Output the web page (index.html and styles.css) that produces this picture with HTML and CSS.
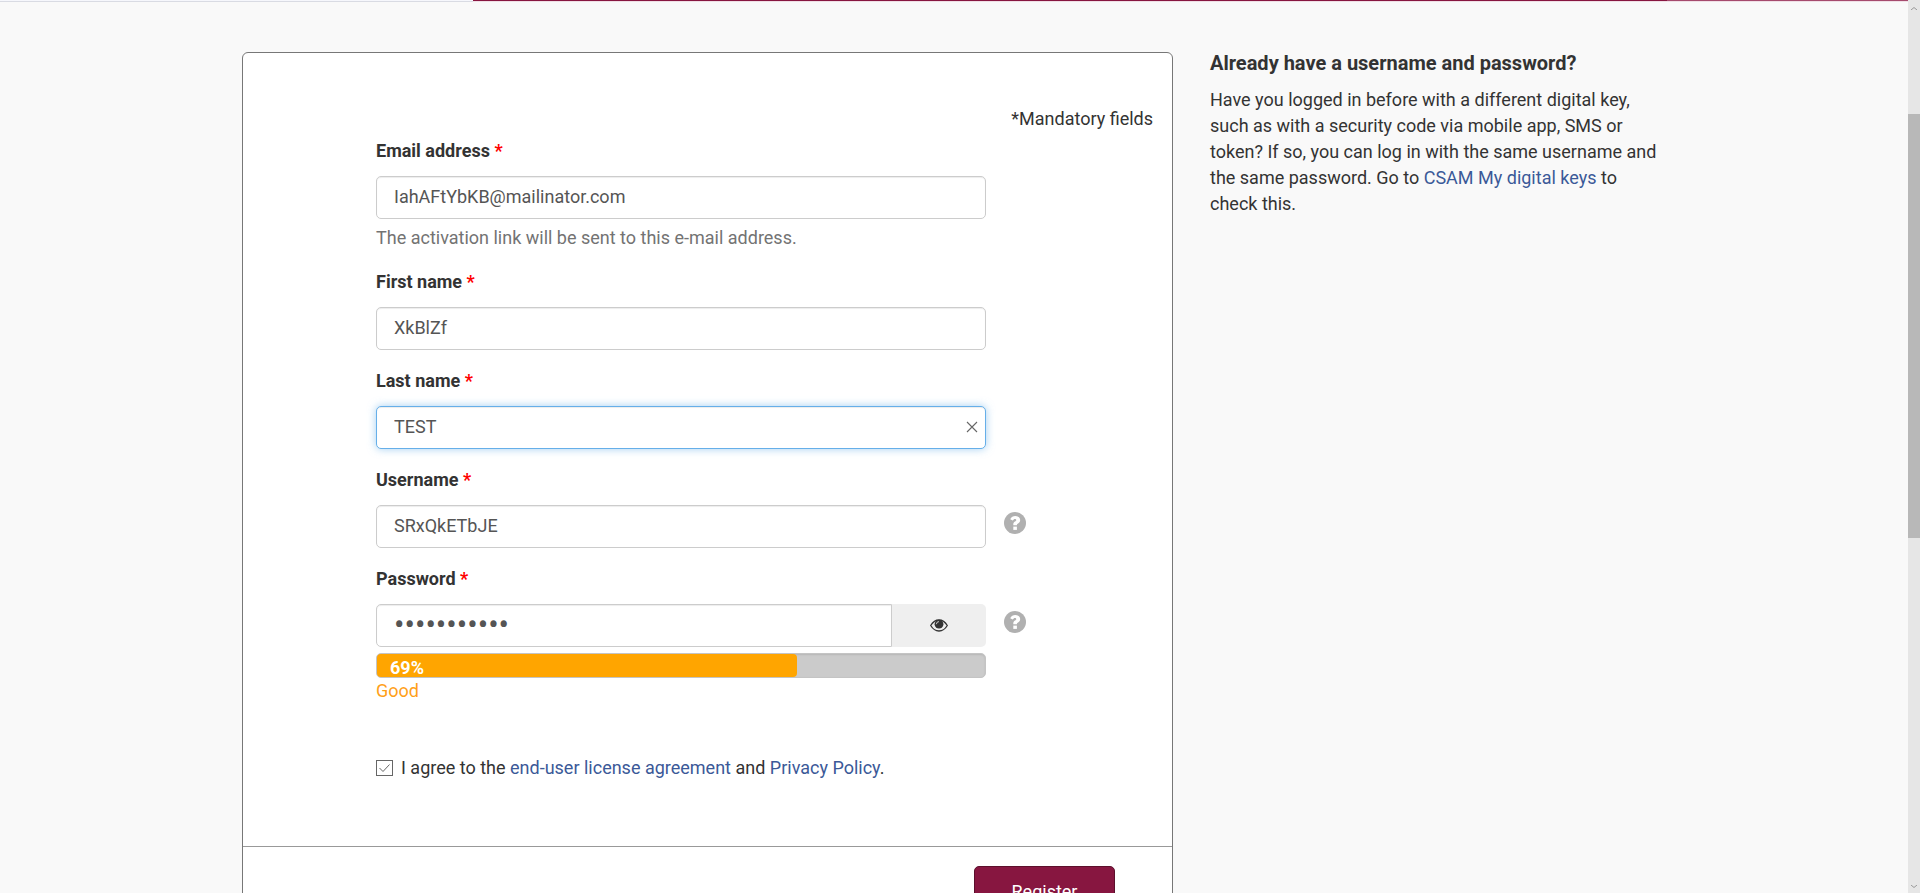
FILE: index.html
```html
<!DOCTYPE html>
<html lang="en">
<head>
<meta charset="utf-8">
<title>Register</title>
<link rel="stylesheet" href="styles.css">
</head>
<body>
<svg class="defs" aria-hidden="true">
  <symbol id="help" viewBox="0 0 22 22">
    <circle cx="11" cy="11" r="11" fill="#b0b0b0"/>
    <path d="M6.2 7.2C7.4 5 9 3.900 11.300 3.900c2.700 0 4.900 1.700 4.900 4.100 0 2.500-1.700 3.200-2.500 3.800-.6.400-.8.700-.8 1.400H9.300c-.1-2 .4-2.700 1.700-3.600.8-.5 1.300-.8 1.300-1.500 0-.7-.6-1.100-1.400-1.100-.9 0-1.400.5-2.200 1.600z" fill="#fff"/>
    <rect x="9.300" y="14.600" width="3.600" height="3.300" fill="#fff"/>
  </symbol>
</svg>
<div class="page">
  <div class="band"><span class="band-start"></span><span class="band-main"></span><span class="band-end"></span></div>
  <main class="layout">
    <form class="card">
      <div class="card-body">
        <p class="mandatory">*Mandatory fields</p>
        <div class="fields">
          <div class="field">
            <label class="label" for="email">Email address <span class="req">*</span></label>
            <input class="input" id="email" type="email" value="IahAFtYbKB@mailinator.com">
            <p class="hint">The activation link will be sent to this e-mail address.</p>
          </div>
          <div class="field">
            <label class="label" for="first">First name <span class="req">*</span></label>
            <input class="input" id="first" type="text" value="XkBlZf">
          </div>
          <div class="field">
            <label class="label" for="last">Last name <span class="req">*</span></label>
            <div class="clearable">
              <input class="input input-active" id="last" type="text" value="TEST">
              <button class="clear" type="button" aria-label="Clear"><svg width="12" height="12" viewBox="0 0 12 12"><path d="M1 1l10 10M11 1L1 11" stroke="#666" stroke-width="1.100"/></svg></button>
            </div>
          </div>
          <div class="field">
            <label class="label" for="user">Username <span class="req">*</span></label>
            <div class="with-help">
              <input class="input" id="user" type="text" value="SRxQkETbJE">
              <button class="help" type="button" aria-label="Username help"><svg width="22" height="22"><use href="#help"/></svg></button>
            </div>
          </div>
          <div class="field">
            <label class="label" for="pass">Password <span class="req">*</span></label>
            <div class="with-help">
              <div class="group">
                <input class="input input-joined" id="pass" type="password" value="abcdefghijk">
                <button class="reveal" type="button" aria-label="Show password"><svg width="18" height="13" viewBox="0 0 18 13"><path d="M.7 6.500C2.800 3 5.600 1 9 1s6.200 2 8.300 5.500C15.200 10 12.400 12 9 12S2.800 10 .7 6.500z" fill="none" stroke="#333" stroke-width="1.300"/><circle cx="9" cy="5.200" r="4.400" fill="#333"/><path d="M6.400 5.200A2.600 2.600 0 0 1 9 2.600" fill="none" stroke="#efefef" stroke-width=".8"/></svg></button>
              </div>
              <button class="help" type="button" aria-label="Password help"><svg width="22" height="22"><use href="#help"/></svg></button>
            </div>
            <div class="meter"><div class="meter-fill" style="width:69%">69%</div></div>
            <p class="strength">Good</p>
          </div>
        </div>
        <div class="agree">
          <input class="check" id="agree" type="checkbox" checked>
          <label for="agree">I agree to the <a class="link" href="#license">end-user license agreement</a> and <a class="link" href="#privacy">Privacy Policy</a>.</label>
        </div>
      </div>
      <div class="card-foot"><button class="submit" type="submit">Register</button></div>
    </form>
    <aside class="aside">
      <h2 class="aside-title">Already have a username and password?</h2>
      <p class="aside-text">Have you logged in before with a different digital key, such as with a security code via mobile app, SMS or token? If so, you can log in with the same username and the same password. Go to <a class="link" href="#keys">CSAM My digital keys</a> to check this.</p>
    </aside>
  </main>
</div>
<div class="scrollbar">
  <svg class="arrow" width="6" height="3" viewBox="0 0 6 3"><path d="M0 3l3-2.500L6 3" fill="none" stroke="#999"/></svg>
  <div class="track"><div class="thumb"></div></div>
  <svg class="arrow" width="6" height="3" viewBox="0 0 6 3"><path d="M0 0l3 2.500L6 0" fill="none" stroke="#999"/></svg>
</div>
</body>
</html>
```
FILE: styles.css
```css
* { box-sizing: border-box; }
body {
  margin: 0;
  height: 100vh;
  overflow: hidden;
  display: flex;
  background: #f9f9f9;
  color: #333;
  font: 18px/26px Roboto, "Liberation Sans", sans-serif;
}
p, h2 { margin: 0; }
button, input { font: inherit; color: inherit; }
button { border: 0; background: none; padding: 0; cursor: pointer; }
svg { display: block; }
.defs { position: absolute; width: 0; height: 0; }
.page { flex: 1; min-width: 0; overflow: hidden; }

.band { display: grid; grid-template-columns: 473fr 1194fr 241fr; height: 2px; }
.band-start { background: #f6f7fc; border-bottom: 1px solid #d9dbe3; }
.band-main { background: #871640; border-bottom: 1px solid #f0dfe6; }
.band-end { background: #a54a6d; border-bottom: 1px solid #f0dfe6; }

.layout {
  display: grid;
  grid-template-columns: 931fr 456fr;
  column-gap: 37px;
  align-items: start;
  max-width: 1424px;
  margin: 50px auto 0;
}
.card { background: #fff; border: 1px solid #777; border-radius: 6px; }
.card-body { padding: 53px 19px 65px 133px; }
.mandatory { text-align: right; line-height: 26px; padding-bottom: 6px; }
.fields { display: flex; flex-direction: column; gap: 18px; width: 610px; max-width: 100%; }
.label { display: block; font-weight: 700; margin-bottom: 12px; }
.req { color: #f00; }
.input {
  display: block;
  width: 100%;
  height: 43px;
  padding: 0 17px 2px;
  border: 1px solid #ccc;
  border-radius: 5px;
  background: #fff;
  color: #555;
  box-shadow: inset 0 1px 1px rgba(0, 0, 0, .075);
  outline: 0;
}
.input-active {
  border-color: #66afe9;
  box-shadow: inset 0 1px 1px rgba(0, 0, 0, .075), 0 0 8px rgba(102, 175, 233, .6);
}
.input-joined { flex: 1; border-radius: 5px 0 0 5px; font-size: 31px; }
.hint { margin-top: 6px; color: #737373; }
.clearable { position: relative; }
.clear { position: absolute; right: 8px; top: 15px; }
.with-help { position: relative; }
.help { position: absolute; left: 100%; top: 7px; margin-left: 18px; }
.group { display: flex; }
.reveal {
  width: 94px;
  height: 43px;
  display: flex;
  align-items: center;
  justify-content: center;
  background: #efefef;
  border-radius: 0 5px 5px 0;
}
.meter {
  height: 25px;
  margin-top: 6px;
  border: 1px solid #c4c4c4;
  border-radius: 5px;
  background: #cbcbcb;
  box-shadow: inset 0 1px 2px rgba(0, 0, 0, .1);
}
.meter-fill {
  height: 23px;
  padding-left: 13px;
  border-radius: 4px;
  background: #ffa500;
  color: #fff;
  font-size: 18px;
  font-weight: 700;
  line-height: 28px;
}
.strength { color: #ff9f19; line-height: 26px; }
.agree { display: flex; align-items: center; gap: 8px; margin-top: 51px; }
.check {
  appearance: none;
  width: 17px;
  height: 16px;
  margin: 0;
  border: 1px solid #666;
  background: #fff url("data:image/svg+xml,%3Csvg xmlns='http://www.w3.org/2000/svg' viewBox='0 0 15 14'%3E%3Cpath d='M2.500 7l3.500 3.500L12.500 3.500' fill='none' stroke='%23666' stroke-width='1'/%3E%3C/svg%3E") center / 100% 100%;
}
.link { color: #3b5998; text-decoration: none; }
.card-foot { display: flex; justify-content: flex-end; border-top: 1px solid #999; padding: 19px 57px 19px 19px; }
.submit {
  min-width: 141px;
  height: 51px;
  border: 1px solid #5c0f2c;
  border-radius: 5px;
  background: #871640;
  color: #fff;
}
.aside-title { font-size: 20px; line-height: 22px; font-weight: 700; }
.aside-text { margin-top: 13px; }

.scrollbar { width: 12px; background: #e6e6e6; display: flex; flex-direction: column; align-items: center; padding: 7px 0 5px; }
.track { flex: 1; width: 100%; padding-top: 104px; }
.thumb { height: 424px; background: #b8b8b8; }
```
